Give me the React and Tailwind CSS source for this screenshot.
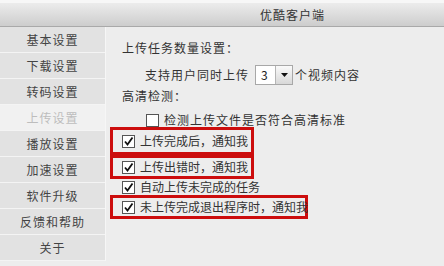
const menu = ['基本设置', '下载设置', '转码设置', '上传设置', '播放设置', '加速设置', '软件升级', '反馈和帮助', '关于']

function Box({ checked }) {
  return (
    <svg width="13" height="13" viewBox="0 0 13 13" className="shrink-0">
      <rect x="0.5" y="0.5" width="12" height="12" fill="#fff" stroke="#555" />
      {checked && <path d="M3 6.5 L5.5 9.5 L10.5 2.5" fill="none" stroke="#111" strokeWidth="1.8" />}
    </svg>
  )
}

function Marked({ text, className = '' }) {
  return (
    <div className={`flex items-center gap-[5px] border-[3px] border-[#cc0d0d] pl-[9px] ml-[4px] whitespace-nowrap leading-[16px] ${className}`}>
      <Box checked />
      <span>{text}</span>
    </div>
  )
}

export default function App() {
  return (
    <div className="w-[444px] h-[266px] flex flex-col bg-[#ededed] text-[12px] text-[#333] overflow-hidden"
      style={{ fontFamily: '"Noto Sans CJK SC", "Noto Sans", sans-serif' }}>
      {/* title bar */}
      <div className="h-[27px] shrink-0 border-t-[3px] border-[#f7f7f7] bg-gradient-to-b from-[#ececec] to-[#cdcdcd] border-b border-b-[#a9a9a9] flex items-center">
        <span className="ml-[260px] text-[#333] tracking-[1px]">优酷客户端</span>
      </div>

      <div className="flex flex-1">
        {/* sidebar */}
        <div className="w-[106px] shrink-0 flex flex-col border-r border-[#f6f6f6] self-start">
          {menu.map((m) => (
            <div key={m}
              className={`h-[26px] flex items-center justify-center border-b border-[#f4f4f4] tracking-[1px] ${m === '上传设置' ? 'bg-[#f1f1f1] text-[#bdbdbd]' : 'bg-[#e2e2e2] text-[#444]'}`}>
              {m}
            </div>
          ))}
        </div>

        {/* content */}
        <div className="flex-1 flex flex-col pt-[11px] leading-[20px] whitespace-nowrap">
          <div className="pl-[16px] tracking-[1px]">上传任务数量设置：</div>
          <div className="flex items-center pl-[39px] mt-[7px] h-[20px] tracking-[1px]">
            <span>支持用户同时上传</span>
            <div className="ml-[6px] w-[38px] h-[20px] bg-white border border-[#a8a8a8] flex">
              <span className="flex-1 pl-[5px] leading-[18px] text-[#222]">3</span>
              <div className="w-[17px] bg-gradient-to-b from-[#fafafa] to-[#d8d8d8] border-l border-[#b5b5b5] flex items-center justify-center">
                <svg width="7" height="4" viewBox="0 0 7 4"><path d="M0 0 H7 L3.5 4 Z" fill="#111" /></svg>
              </div>
            </div>
            <span className="ml-[2px]">个视频内容</span>
          </div>
          <div className="pl-[16px] mt-[1px] tracking-[1px]">高清检测：</div>
          <div className="flex items-center gap-[5px] pl-[40px] mt-[4px] tracking-[1px]">
            <Box />
            <span>检测上传文件是否符合高清标准</span>
          </div>

          <Marked text="上传完成后，通知我" className="w-[144px] h-[28px] mt-[-3px]" />
          <Marked text="上传出错时，通知我" className="w-[144px] h-[24px]" />
          <div className="flex items-center gap-[5px] pl-[16px] h-[16px] leading-[16px]">
            <Box checked />
            <span>自动上传未完成的任务</span>
          </div>
          <Marked text="未上传完成退出程序时，通知我" className="w-[198px] h-[24px]" />
        </div>
      </div>
    </div>
  )
}
